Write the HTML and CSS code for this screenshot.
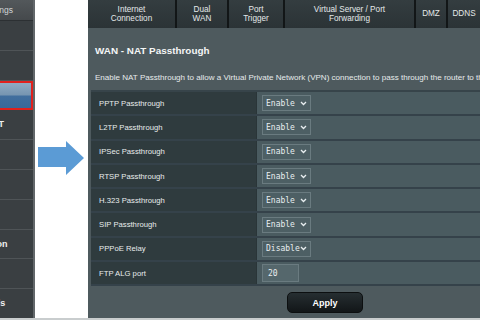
FILE: index.html
```html
<!DOCTYPE html>
<html>
<head>
<meta charset="utf-8">
<link rel="stylesheet" href="styles.css">
</head>
<body>
<div class="page">
  <nav class="sidebar">
    <div class="side-head"><span>Advanced Settings</span></div>
    <div class="side-item"><span>Wireless</span></div>
    <div class="side-item"><span>LAN</span></div>
    <div class="side-item side-active"><span>WAN</span></div>
    <div class="side-item"><span>Alexa &amp; IFTTT</span></div>
    <div class="side-item"><span>IPv6</span></div>
    <div class="side-item"><span>VPN</span></div>
    <div class="side-item"><span>Firewall</span></div>
    <div class="side-item"><span>Administration</span></div>
    <div class="side-item"><span>System Log</span></div>
    <div class="side-item"><span>Network Tools</span></div>
  </nav>
  <div class="gap">
    <svg class="arrow" width="48" height="36" viewBox="0 0 48 36">
      <polygon points="0,6 28,6 28,0 46,17 28,34 28,26 0,26" fill="#5b9bd5"/>
    </svg>
  </div>
  <main class="panel">
    <div class="tabs">
      <div class="tab">Internet<br>Connection</div>
      <div class="tab">Dual<br>WAN</div>
      <div class="tab">Port<br>Trigger</div>
      <div class="tab">Virtual Server / Port<br>Forwarding</div>
      <div class="tab">DMZ</div>
      <div class="tab">DDNS</div>
    </div>
    <div class="content">
      <h1 class="title">WAN - NAT Passthrough</h1>
      <p class="desc">Enable NAT Passthrough to allow a Virtual Private Network (VPN) connection to pass through the router to the VPN server.</p>
    </div>
    <div class="table">
      <div class="row"><div class="label">PPTP Passthrough</div><div class="value"><div class="select"><span>Enable</span><svg class="chev" width="7" height="5" viewBox="0 0 7 5"><polyline points="1,1 3.5,3.5 6,1" fill="none" stroke="#e8eef0" stroke-width="1.3"/></svg></div></div></div>
      <div class="row"><div class="label">L2TP Passthrough</div><div class="value"><div class="select"><span>Enable</span><svg class="chev" width="7" height="5" viewBox="0 0 7 5"><polyline points="1,1 3.5,3.5 6,1" fill="none" stroke="#e8eef0" stroke-width="1.3"/></svg></div></div></div>
      <div class="row"><div class="label">IPSec Passthrough</div><div class="value"><div class="select"><span>Enable</span><svg class="chev" width="7" height="5" viewBox="0 0 7 5"><polyline points="1,1 3.5,3.5 6,1" fill="none" stroke="#e8eef0" stroke-width="1.3"/></svg></div></div></div>
      <div class="row"><div class="label">RTSP Passthrough</div><div class="value"><div class="select"><span>Enable</span><svg class="chev" width="7" height="5" viewBox="0 0 7 5"><polyline points="1,1 3.5,3.5 6,1" fill="none" stroke="#e8eef0" stroke-width="1.3"/></svg></div></div></div>
      <div class="row"><div class="label">H.323 Passthrough</div><div class="value"><div class="select"><span>Enable</span><svg class="chev" width="7" height="5" viewBox="0 0 7 5"><polyline points="1,1 3.5,3.5 6,1" fill="none" stroke="#e8eef0" stroke-width="1.3"/></svg></div></div></div>
      <div class="row"><div class="label">SIP Passthrough</div><div class="value"><div class="select"><span>Enable</span><svg class="chev" width="7" height="5" viewBox="0 0 7 5"><polyline points="1,1 3.5,3.5 6,1" fill="none" stroke="#e8eef0" stroke-width="1.3"/></svg></div></div></div>
      <div class="row"><div class="label">PPPoE Relay</div><div class="value"><div class="select"><span>Disable</span><svg class="chev" width="7" height="5" viewBox="0 0 7 5"><polyline points="1,1 3.5,3.5 6,1" fill="none" stroke="#e8eef0" stroke-width="1.3"/></svg></div></div></div>
      <div class="row"><div class="label">FTP ALG port</div><div class="value"><div class="input">20</div></div></div>
    </div>
    <div class="actions">
      <button class="apply">Apply</button>
    </div>
  </main>
</div>
</body>
</html>
```
FILE: styles.css
```css
html, body {
  margin: 0;
  padding: 0;
  background: #ffffff;
}
body {
  width: 480px;
  height: 320px;
  overflow: hidden;
  font-family: "Liberation Sans", Arial, sans-serif;
}
.page {
  display: flex;
  height: 318px;
  border-bottom: 2px solid #c9cdce;
}
.sidebar {
  width: 33px;
  flex: none;
  background: #3a3f42;
  border-right: 2px solid #62676a;
  overflow: hidden;
  display: flex;
  flex-direction: column;
}
.side-head {
  height: 20px;
  flex: none;
  background: linear-gradient(#53585b, #45494c);
  border-bottom: 1px solid #2c3033;
  color: #d0d4d6;
  font-size: 8.5px;
  line-height: 20px;
  white-space: nowrap;
  text-indent: -58px;
}
.side-item {
  flex: none;
  border-bottom: 1px solid #4f5457;
  color: #f0f0f0;
  font-size: 9px;
  font-weight: bold;
  white-space: nowrap;
  text-indent: -56px;
  box-sizing: border-box;
  height: 29.8px;
  line-height: 28px;
}
.side-active {
  border: 2px solid #e1211d;
  border-left: none;
  background: linear-gradient(#8fabc3 0%, #7695b1 48%, #416f9e 52%, #3b6999 100%);
}
.gap {
  width: 53px;
  flex: none;
  display: flex;
  align-items: center;
  justify-content: center;
}
.arrow {
  display: block;
  margin-left: 1px;
}
.panel {
  flex: 1;
  min-width: 0;
  background: #4e5a5e;
  overflow: hidden;
  display: flex;
  flex-direction: column;
}
.tabs {
  display: grid;
  grid-template-columns: 87px 50px 54px 129px 30px 32px;
  column-gap: 2px;
  background: #121617;
  height: 28px;
  flex: none;
}
.tab {
  background: linear-gradient(#343d40, #2b3336);
  color: #e4e8e9;
  font-size: 8.2px;
  line-height: 9.5px;
  text-align: center;
  display: flex;
  align-items: center;
  justify-content: center;
  white-space: nowrap;
}
.content {
  padding: 0 0 0 7px;
}
.title {
  margin: 16px 0 0 0;
  font-size: 9.9px;
  font-weight: bold;
  color: #f4f6f6;
  line-height: 14px;
}
.desc {
  margin: 14px 0 0 0;
  font-size: 8.05px;
  color: #e6eaeb;
  line-height: 12px;
  white-space: nowrap;
}
.table {
  margin: 6px 0 0 3px;
  border-top: 2px solid #37444a;
  width: 420px;
}
.row {
  display: flex;
  height: 22.3px;
  border-bottom: 2px solid #35424a;
}
.label {
  width: 157px;
  flex: none;
  background: #2f3b3e;
  color: #e8ecec;
  font-size: 7.7px;
  padding-left: 8px;
  display: flex;
  align-items: center;
  border-right: 1px solid #2a3538;
}
.value {
  flex: 1;
  background: #4a5b60;
  display: flex;
  align-items: center;
  padding-left: 5px;
}
.select {
  width: 41px;
  height: 14px;
  border: 1px solid #6a7b80;
  background: #4d5f64;
  display: flex;
  align-items: center;
  justify-content: space-between;
  padding: 0 3px 0 3px;
  box-sizing: content-box;
  font-family: "DejaVu Sans Mono", monospace;
  font-size: 8px;
  color: #e8eef0;
}
.chev {
  display: block;
  flex: none;
}
.input {
  width: 30px;
  height: 16px;
  border: 1px solid #6a7b80;
  background: #55676c;
  padding-left: 5px;
  font-family: "DejaVu Sans Mono", monospace;
  font-size: 8px;
  color: #e8eef0;
  display: flex;
  align-items: center;
}
.actions {
  display: flex;
  padding-left: 199px;
  padding-top: 6px;
}
.apply {
  width: 76px;
  height: 21px;
  border: 1px solid #0c0f10;
  border-radius: 5px;
  background: linear-gradient(#262e31, #121618);
  color: #ffffff;
  font-family: "Liberation Sans", Arial, sans-serif;
  font-size: 9px;
  font-weight: bold;
  padding: 0;
}
```
